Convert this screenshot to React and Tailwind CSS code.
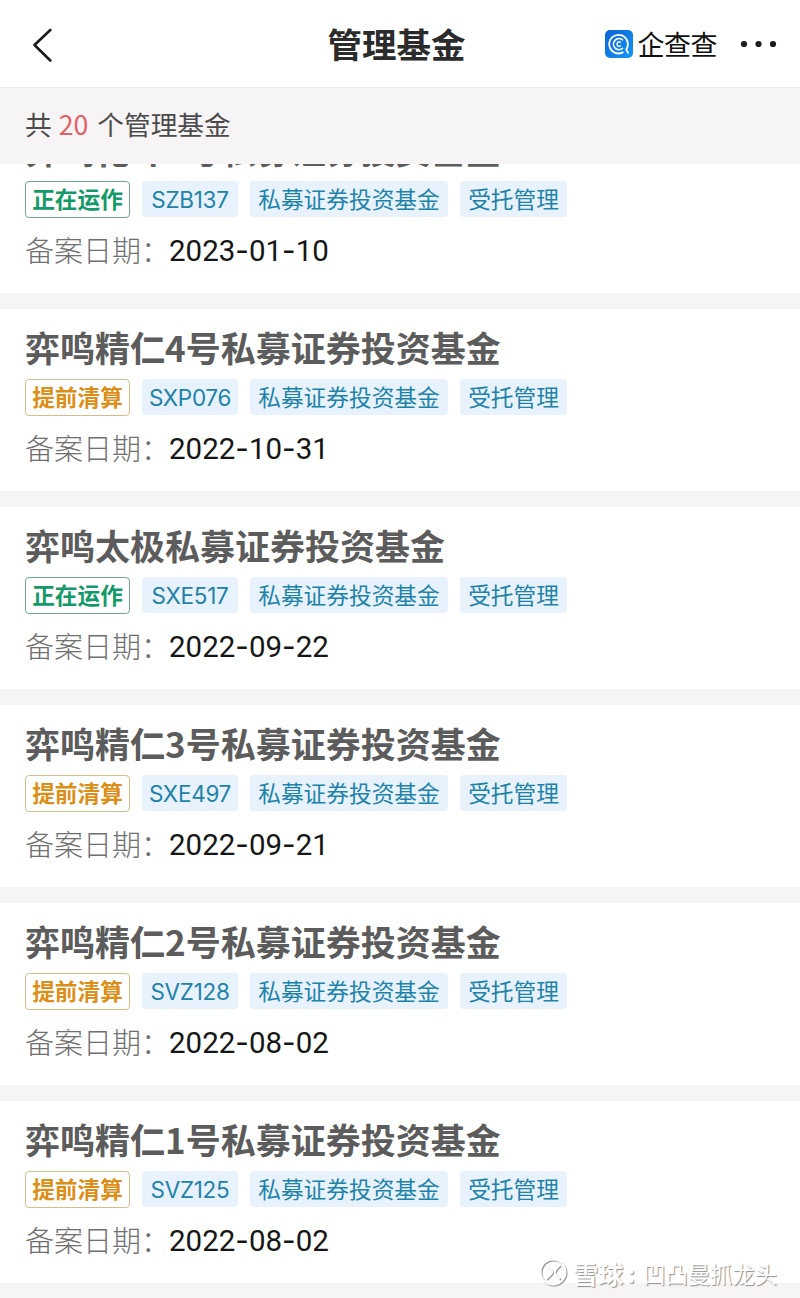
import React from 'react';

const funds = [
  { name: '弈鸣化斗3号私募证券投资基金', running: true, code: 'SZB137', date: '2023-01-10' },
  { name: '弈鸣精仁4号私募证券投资基金', running: false, code: 'SXP076', date: '2022-10-31' },
  { name: '弈鸣太极私募证券投资基金', running: true, code: 'SXE517', date: '2022-09-22' },
  { name: '弈鸣精仁3号私募证券投资基金', running: false, code: 'SXE497', date: '2022-09-21' },
  { name: '弈鸣精仁2号私募证券投资基金', running: false, code: 'SVZ128', date: '2022-08-02' },
  { name: '弈鸣精仁1号私募证券投资基金', running: false, code: 'SVZ125', date: '2022-08-02' },
];

function Header() {
  return (
    <header className="relative flex h-[88px] shrink-0 items-center justify-between border-b border-[#efedee] bg-white pr-[23px] pl-[32px]">
      <svg width="22" height="36" viewBox="0 0 22 36" fill="none" stroke="#1c1c1c" strokeWidth="2.6" strokeLinecap="round" strokeLinejoin="round">
        <path d="M18.3 4 L2.5 19 L18.3 34.5" />
      </svg>
      <h1 className="absolute inset-x-0 top-[17px] pr-[7px] text-center text-[34.5px] leading-[52px] font-bold text-[#2b2b2b]">管理基金</h1>
      <div className="flex items-center">
        <Logo />
        <span className="ml-[5px] text-[27px] leading-[40px] tracking-[-0.5px] text-[#111]">企查查</span>
        <svg className="ml-[23px]" width="37" height="8" viewBox="0 0 37 8" fill="#1d1d1d">
          <circle cx="4" cy="4" r="3.1" />
          <circle cx="18.5" cy="4" r="3.1" />
          <circle cx="33" cy="4" r="3.1" />
        </svg>
      </div>
    </header>
  );
}

function Logo() {
  return (
    <svg width="28" height="28" viewBox="0 0 28 28" fill="none">
      <defs>
        <linearGradient id="logo" x1="0" y1="0" x2="1" y2="1">
          <stop offset="0" stopColor="#0b62d6" />
          <stop offset="1" stopColor="#1497f5" />
        </linearGradient>
      </defs>
      <rect width="28" height="28" rx="5" fill="url(#logo)" />
      <g stroke="#fff" strokeLinecap="round">
        <path d="M17.8 22.4 A9.3 9.3 0 1 1 21.2 19.4 L23 22.8" strokeWidth="1.8" strokeLinejoin="round" />
        <path d="M17.4 9.8 A5.5 5.5 0 1 0 17.4 18.4" strokeWidth="1.7" />
        <path d="M15.4 12.3 A2.2 2.2 0 1 0 15.4 15.9" strokeWidth="1.4" />
      </g>
    </svg>
  );
}

// dashes are set in a wider face than the digits
function FundDate({ date }) {
  const [year, month, day] = date.split('-');
  return (
    <span className="font-[Roboto] text-[29.5px] leading-[44px] text-[#161616]">
      {year}
      <span className="font-[Inter]">-</span>
      {month}
      <span className="font-[Inter]">-</span>
      {day}
    </span>
  );
}

function FundCard({ fund }) {
  return (
    <article className="h-[182px] shrink-0 bg-white px-[25px] pt-[12px]">
      <h2 className="h-[52px] text-[35px] leading-[52px] font-bold whitespace-nowrap text-[#5c5c5c]">{fund.name}</h2>
      <div className="mt-[6px] flex gap-[12px] text-[22.7px] leading-[36px] whitespace-nowrap text-[#2182a9]">
        {fund.running ? (
          <span className="h-[37px] w-[105px] rounded-[4px] border border-[#6da898] text-center leading-[34px] font-bold text-[#139a68]">正在运作</span>
        ) : (
          <span className="h-[37px] w-[105px] rounded-[4px] border border-[#d5bd8c] text-center leading-[34px] font-bold text-[#dc8e17]">提前清算</span>
        )}
        <span className="h-[36px] w-[96px] rounded-[4px] bg-[#e7f2fd] text-center font-[Inter] text-[22.5px] leading-[37px] tracking-[-0.3px]">{fund.code}</span>
        <span className="h-[36px] w-[198px] rounded-[4px] bg-[#e7f2fd] text-center leading-[35px]">私募证券投资基金</span>
        <span className="h-[36px] w-[107px] rounded-[4px] bg-[#e7f2fd] text-center leading-[35px]">受托管理</span>
      </div>
      <div className="mt-[10px] flex h-[42px] text-[29px] leading-[42px] whitespace-nowrap">
        <span className="w-[144px] font-light text-[#707070]">备案日期：</span>
        <FundDate date={fund.date} />
      </div>
    </article>
  );
}

function Watermark() {
  return (
    <div className="absolute right-[23px] bottom-[8px] flex items-center text-white [text-shadow:1px_1px_1px_#8c8c8c]">
      <svg width="30" height="30" viewBox="0 0 30 30" fill="none" className="mr-[4px]">
        <g stroke="#999" strokeWidth="2" transform="translate(1 1)">
          <circle cx="14" cy="14" r="12.5" />
          <path d="M7 7 L12 12 Q14 14 12 16 L7 21 M21 7 L17 11 Q14.5 14 17 17 L21 21" />
        </g>
        <g stroke="#fff" strokeWidth="2">
          <circle cx="14" cy="14" r="12.5" />
          <path d="M7 7 L12 12 Q14 14 12 16 L7 21 M21 7 L17 11 Q14.5 14 17 17 L21 21" />
        </g>
      </svg>
      <span className="text-[25px] leading-[34px] font-bold">雪球</span>
      <span className="w-[20px] pl-[4px] text-[24px] leading-[34px] font-bold">:</span>
      <span className="text-[22.3px] leading-[34px]">凹凸曼抓龙头</span>
    </div>
  );
}

export default function App() {
  return (
    <main className="relative flex h-[1298px] w-[800px] flex-col overflow-hidden bg-[#f7f4f5] font-['Noto_Sans_CJK_SC',sans-serif]">
      <Header />
      <p className="h-[76px] shrink-0 pl-[25px] text-[26.7px] leading-[71px] text-[#4b4b4b]">
        共<span className="mr-[9px] ml-[7px] text-[#df6268]">20</span>个管理基金
      </p>
      {/* list is scrolled, so the first card is cut by the summary bar */}
      <div className="min-h-0 flex-1 overflow-hidden">
        <div className="-mt-[53px] flex flex-col gap-[16px]">
          {funds.map((fund) => (
            <FundCard key={fund.code} fund={fund} />
          ))}
        </div>
      </div>
      <Watermark />
    </main>
  );
}
